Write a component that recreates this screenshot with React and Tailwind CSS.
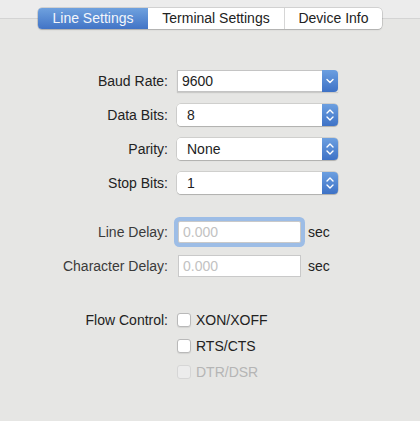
import React from 'react';

const font = { fontFamily: '"Liberation Sans", Arial, sans-serif' };

const ChevronDown = () => (
  <svg width="8" height="6" viewBox="0 0 8 6" fill="none">
    <path d="M1 1.5 L4 4.5 L7 1.5" stroke="white" strokeWidth="1.4" strokeLinecap="round" strokeLinejoin="round" />
  </svg>
);

const ChevronUpDown = () => (
  <svg width="8" height="14" viewBox="0 0 8 14" fill="none">
    <path d="M1 5 L4 2 L7 5" stroke="white" strokeWidth="1.4" strokeLinecap="round" strokeLinejoin="round" />
    <path d="M1 9 L4 12 L7 9" stroke="white" strokeWidth="1.4" strokeLinecap="round" strokeLinejoin="round" />
  </svg>
);

const Row = ({ label, dim, children }) => (
  <div className="flex items-center h-[22px]">
    <div className={`w-[168px] text-right text-[14px] ${dim ? 'text-[#3a3a3a]' : 'text-[#222]'}`}>{label}</div>
    <div className="ml-[9px] flex items-center">{children}</div>
  </div>
);

const ComboBox = ({ value }) => (
  <div className="flex h-[22px] w-[161px] shadow-[0_1px_1px_rgba(0,0,0,0.12)]">
    <div className="flex-1 bg-white border border-[#c4c4c4] border-r-0 flex items-center pl-[4px] text-[14px] text-[#222]">
      {value}
    </div>
    <div className="w-[16px] rounded-r-[4px] bg-gradient-to-b from-[#6c9fe0] to-[#3e72c6] flex items-center justify-center">
      <ChevronDown />
    </div>
  </div>
);

const PopUp = ({ value }) => (
  <div className="flex h-[22px] w-[161px] rounded-[4px] shadow-[0_0_0_0.5px_rgba(0,0,0,0.2),0_1px_1px_rgba(0,0,0,0.15)] overflow-hidden">
    <div className="flex-1 bg-white flex items-center pl-[10px] text-[14px] text-[#222]">{value}</div>
    <div className="w-[16px] bg-gradient-to-b from-[#6c9fe0] to-[#3e72c6] flex items-center justify-center">
      <ChevronUpDown />
    </div>
  </div>
);

const TextField = ({ focused }) => (
  <div
    className={`h-[22px] w-[123px] ml-[1px] bg-white border border-[#c9c9c9] flex items-center pl-[4px] text-[14px] text-[#c2c2c2] ${
      focused ? 'ring-[4px] ring-[#9dbde6] rounded-[2px]' : ''
    }`}
  >
    0.000
  </div>
);

const Check = ({ label, disabled }) => (
  <div className="flex items-center h-[14px]">
    <div
      className={`w-[14px] h-[14px] rounded-[3px] border ${
        disabled ? 'bg-[#ececec] border-[#d6d6d6]' : 'bg-white border-[#b9b9b9] shadow-[0_1px_1px_rgba(0,0,0,0.08)]'
      }`}
    />
    <span className={`ml-[5px] text-[14px] ${disabled ? 'text-[#b5b5b5]' : 'text-[#222]'}`}>{label}</span>
  </div>
);

export default function App() {
  return (
    <div className="w-[420px] h-[421px] bg-[#e6e6e4] overflow-hidden" style={font}>
      {/* window strip behind the tab control */}
      <div className="h-[19px] bg-[#ececec] border-b border-[#d4d4d4]" />

      {/* segmented tabs */}
      <div className="mt-[-11px] mx-auto w-[344px] h-[21px] flex rounded-[4px] bg-white shadow-[0_0_0_0.5px_rgba(0,0,0,0.22),0_1px_1.5px_rgba(0,0,0,0.15)] overflow-hidden text-[14px]">
        <div className="w-[110px] flex items-center justify-center text-[#f3f6fb] bg-gradient-to-b from-[#6fa1de] to-[#4274c6]">
          Line Settings
        </div>
        <div className="w-[137px] flex items-center justify-center text-[#222] border-r border-[#d6d6d6]">
          Terminal Settings
        </div>
        <div className="flex-1 flex items-center justify-center text-[#222]">Device Info</div>
      </div>

      {/* serial settings */}
      <div className="mt-[41px] flex flex-col gap-[12px]">
        <Row label="Baud Rate:"><ComboBox value="9600" /></Row>
        <Row label="Data Bits:"><PopUp value="8" /></Row>
        <Row label="Parity:"><PopUp value="None" /></Row>
        <Row label="Stop Bits:"><PopUp value="1" /></Row>
      </div>

      {/* delays */}
      <div className="mt-[27px] flex flex-col gap-[12px]">
        <Row label="Line Delay:" dim>
          <TextField focused />
          <span className="ml-[7px] text-[14px] text-[#222]">sec</span>
        </Row>
        <Row label="Character Delay:" dim>
          <TextField />
          <span className="ml-[7px] text-[14px] text-[#222]">sec</span>
        </Row>
      </div>

      {/* flow control */}
      <div className="mt-[36px] flex">
        <div className="w-[168px] text-right text-[14px] text-[#222] leading-[14px]">Flow Control:</div>
        <div className="ml-[9px] flex flex-col gap-[12px]">
          <Check label="XON/XOFF" />
          <Check label="RTS/CTS" />
          <Check label="DTR/DSR" disabled />
        </div>
      </div>
    </div>
  );
}
